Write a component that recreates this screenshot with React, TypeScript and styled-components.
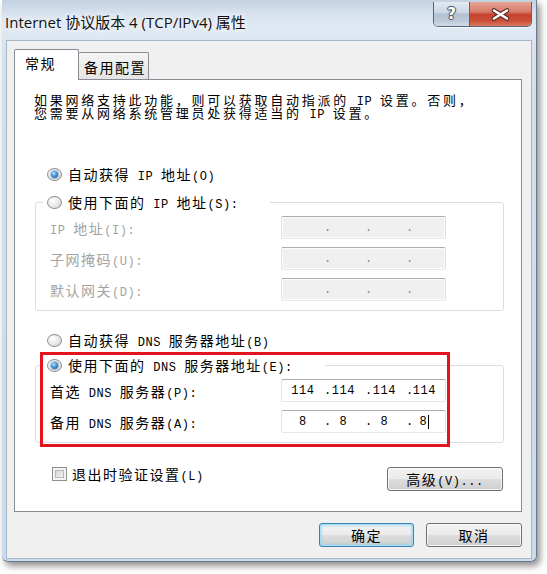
import React from "react";
import styled, { createGlobalStyle, css } from "styled-components";

const CJK_STACK = `"Noto Sans CJK SC", "Noto Sans", sans-serif`;

const GlobalStyle = createGlobalStyle`
  * { box-sizing: border-box; }
  html, body { margin: 0; padding: 0; background: #ffffff; }
  body {
    font-family: ${CJK_STACK};
    font-size: 14px;
    letter-spacing: 1.5px;
    color: #000;
  }
`;

const Latin = styled.span`
  font-family: "Liberation Mono", "DejaVu Sans Mono", monospace;
  font-size: 12px;
  line-height: 0;
  letter-spacing: 0.55px;
  white-space: pre;
`;

const Mixed: React.FC<{ text: string }> = ({ text }) => (
  <>
    {text
      .split(/([\x20-\x7e]+)/)
      .filter(Boolean)
      .map((part, i) =>
        /^[\x20-\x7e]+$/.test(part) ? (
          <Latin key={i}>{part}</Latin>
        ) : (
          <React.Fragment key={i}>{part}</React.Fragment>
        )
      )}
  </>
);

const Page = styled.div`
  width: 547px;
  height: 574px;
  overflow: hidden;
  padding-left: 2px;
  background: #fff;
`;

const Window = styled.div`
  width: 535px;
  display: flex;
  flex-direction: column;
  background: linear-gradient(
    180deg,
    #c2d0e0 0px,
    #d8e3ef 14px,
    #e0e9f3 30px,
    #d3e0ee 60px,
    #cadbeb 100%
  );
  border-right: 1px solid #6b7888;
  border-bottom: 1px solid #6b7888;
  border-bottom-right-radius: 6px;
  border-bottom-left-radius: 6px;
  box-shadow: 3px 4px 7px rgba(0, 0, 0, 0.45);
`;

const TitleBar = styled.div`
  height: 40px;
  display: flex;
  justify-content: space-between;
  align-items: flex-start;
  padding: 0 4px 0 3px;
`;

const TitleText = styled.div`
  margin-top: 11px;
  font-family: "Open Sans", "Noto Sans CJK SC", sans-serif;
  font-size: 15px;
  line-height: 22px;
  letter-spacing: 0;
  color: #111;
  white-space: nowrap;
  text-shadow: 0 0 6px #fff, 0 0 10px rgba(255, 255, 255, 0.9);
`;

const CaptionGroup = styled.div`
  display: flex;
  margin-top: 2px;
  height: 25px;
  border: 1px solid #56667a;
  border-top: none;
  border-radius: 0 0 5px 5px;
  overflow: hidden;
  box-shadow: 0 1px 0 rgba(255, 255, 255, 0.7);
`;

const CaptionButton = styled.div<{ $close?: boolean; $w: number }>`
  width: ${(p) => p.$w}px;
  display: flex;
  align-items: center;
  justify-content: center;
  background: ${(p) =>
    p.$close
      ? "linear-gradient(180deg, #e7a597 0%, #d77a68 42%, #c5422d 52%, #cc5039 80%, #dc7a62 100%)"
      : "linear-gradient(180deg, #e2e9f1 0%, #cdd8e4 42%, #b3c2d3 52%, #bccadb 80%, #cfdbe7 100%)"};
  & + & {
    border-left: 1px solid #56667a;
  }
`;

const HelpGlyph = styled.span`
  font-family: "DejaVu Sans", sans-serif;
  font-weight: bold;
  font-size: 15px;
  line-height: 1;
  letter-spacing: 0;
  color: #fff;
  text-shadow: 1px 0 0 #4a5666, -1px 0 0 #4a5666, 0 1px 0 #4a5666,
    0 -1px 0 #4a5666, 0 0 2px #2c3a4a;
`;

const Client = styled.div`
  margin: 0 4px 2px 4px;
  height: 519px;
  background: #f0f0f0;
  border: 1px solid #a9b6c5;
  padding: 8px 9px 11px 7px;
  display: flex;
  flex-direction: column;
`;

const TabStrip = styled.div`
  display: flex;
  align-items: flex-end;
  height: 30px;
`;

const Tab = styled.div<{ $active?: boolean }>`
  position: relative;
  display: flex;
  align-items: center;
  border: 1px solid #898c95;
  border-bottom: none;
  border-radius: 2px 2px 0 0;
  white-space: nowrap;
  ${(p) =>
    p.$active
      ? css`
          width: 65px;
          height: 31px;
          margin-bottom: -1px;
          z-index: 1;
          background: #fff;
          padding: 0 0 5px 10px;
        `
      : css`
          width: 70px;
          height: 27px;
          border-left: none;
          background: linear-gradient(180deg, #f4f4f4, #e4e4e4);
          padding: 1px 0 0 5px;
        `}
`;

const Panel = styled.div`
  position: relative;
  width: 508px;
  height: 433px;
  border: 1px solid #898c95;
  background: #fff;
  padding-top: 13px;
  display: flex;
  flex-direction: column;
  align-items: flex-start;
`;

const Intro = styled.div`
  margin-left: 19px;
  font-size: 13px;
  letter-spacing: 2.75px;
  line-height: 13px;
  white-space: nowrap;
`;

const IntroLine = styled.div`
  height: 13px;
`;

const OptionRow = styled.div<{ $mt: number }>`
  display: flex;
  align-items: center;
  gap: 6px;
  height: 16px;
  margin: ${(p) => p.$mt}px 0 0 32px;
  white-space: nowrap;
`;

const Radio = styled.span<{ $checked?: boolean }>`
  position: relative;
  flex: none;
  width: 15px;
  height: 13px;
  border-radius: 50%;
  border: 1px solid #8d9095;
  background: radial-gradient(
    ellipse at 35% 30%,
    #ffffff 0%,
    #ececec 45%,
    #c9cbce 100%
  );
  ${(p) =>
    p.$checked &&
    css`
      &::after {
        content: "";
        position: absolute;
        left: 3px;
        top: 2px;
        width: 7px;
        height: 7px;
        border-radius: 50%;
        background: radial-gradient(
          circle at 40% 35%,
          #c4e8ff 0%,
          #4a9ad8 40%,
          #1a4f8c 100%
        );
        box-shadow: 0 0 0 1px rgba(40, 90, 150, 0.35);
      }
    `}
`;

const GroupBox = styled.div<{ $mt: number }>`
  margin: ${(p) => p.$mt}px 0 0 20px;
  width: 469px;
  border: 1px solid #d5dfe5;
  border-radius: 3px;
  padding: 0 0 9px 14px;
`;

const GroupTitle = styled.div<{ $w: number }>`
  display: flex;
  align-items: center;
  gap: 6px;
  height: 16px;
  width: ${(p) => p.$w}px;
  margin: -9px 0 0 -7px;
  padding-left: 4px;
  background: #fff;
  white-space: nowrap;
`;

const FieldGrid = styled.div`
  display: grid;
  grid-template-columns: 231px 165px;
  grid-auto-rows: 23px;
  row-gap: 8px;
  align-items: center;
  margin-top: 6px;
`;

const FieldLabel = styled.div<{ $disabled?: boolean }>`
  color: ${(p) => (p.$disabled ? "#a3a3a3" : "#000")};
  white-space: nowrap;
  line-height: 16px;
`;

const IpBox = styled.div<{ $disabled?: boolean }>`
  width: 165px;
  height: 23px;
  border: 1px solid;
  border-color: #abadb3 #dbdfe6 #e3e9ef #e2e3ea;
  border-radius: 2px;
  background: ${(p) => (p.$disabled ? "#f0f0f0" : "#fff")};
  color: ${(p) => (p.$disabled ? "#8a8a8a" : "#000")};
  display: grid;
  grid-template-columns: 42px 4px 37px 4px 37px 4px 35px;
  align-items: center;
  box-shadow: ${(p) => (p.$disabled ? "inset 0 0 0 1px #fbfbfb" : "none")};
`;

const Octet = styled.span`
  display: flex;
  justify-content: center;
  align-items: center;
  font-family: "Liberation Mono", "DejaVu Sans Mono", monospace;
  font-size: 12px;
  letter-spacing: 0.55px;
  white-space: pre;
  &:not(:first-child) {
    padding-right: 6px;
  }
`;

const Dot = styled.span`
  font-family: "Liberation Mono", monospace;
  font-size: 12px;
  letter-spacing: 0;
  text-align: center;
`;

const Caret = styled.span`
  display: inline-block;
  width: 1px;
  height: 14px;
  margin-left: 1px;
  background: #000;
`;

const BottomRow = styled.div`
  display: flex;
  justify-content: space-between;
  align-items: flex-start;
  width: 451px;
  margin: 23px 0 0 37px;
`;

const CheckRow = styled.div`
  display: flex;
  align-items: center;
  gap: 5px;
  height: 16px;
  white-space: nowrap;
`;

const CheckBox = styled.span`
  flex: none;
  width: 15px;
  height: 14px;
  border: 1px solid #8e8f8f;
  background: linear-gradient(135deg, #c9cdd2 0%, #e6e8ea 55%, #f8f8f8 100%);
  box-shadow: inset 0 0 0 2px #f4f4f4, inset 0 0 0 3px #b4b9bf;
`;

const PushButton = styled.button<{ $w: number; $default?: boolean }>`
  width: ${(p) => p.$w}px;
  height: 24px;
  padding: 0;
  border: 1px solid ${(p) => (p.$default ? "#3c7fb1" : "#707070")};
  border-radius: 3px;
  background: linear-gradient(
    180deg,
    #f3f3f3 0%,
    #ebebeb 48%,
    #dddddd 52%,
    #cfcfcf 100%
  );
  box-shadow: ${(p) =>
    p.$default
      ? "inset 0 0 0 1px #a9e0f7, inset 0 0 3px 1px #7fcdf0"
      : "inset 0 0 0 1px rgba(255,255,255,0.75)"};
  font-family: ${CJK_STACK};
  font-size: 14px;
  line-height: 16px;
  letter-spacing: 1.5px;
  color: #000;
  white-space: nowrap;
`;

const AdvancedButton = styled(PushButton)`
  margin-top: 1px;
`;

const RedFrame = styled.div`
  position: absolute;
  left: 25px;
  top: 272px;
  width: 410px;
  height: 95px;
  border: 3px solid #e3141f;
  pointer-events: none;
`;

const Footer = styled.div`
  display: flex;
  justify-content: flex-end;
  gap: 12px;
  margin-top: 11px;
`;

const IpField: React.FC<{ octets?: string[]; disabled?: boolean; caret?: boolean }> = ({
  octets = ["", "", "", ""],
  disabled,
  caret,
}) => (
  <IpBox $disabled={disabled}>
    <Octet>{octets[0]}</Octet>
    <Dot>.</Dot>
    <Octet>{octets[1]}</Octet>
    <Dot>.</Dot>
    <Octet>{octets[2]}</Octet>
    <Dot>.</Dot>
    <Octet>
      {octets[3]}
      {caret && <Caret />}
    </Octet>
  </IpBox>
);

export default function App() {
  return (
    <>
      <GlobalStyle />
      <Page>
        <Window>
          <TitleBar>
            <TitleText>Internet 协议版本 4 (TCP/IPv4) 属性</TitleText>
            <CaptionGroup>
              <CaptionButton $w={35}>
                <HelpGlyph>?</HelpGlyph>
              </CaptionButton>
              <CaptionButton $w={62} $close>
                <svg width="19" height="13" viewBox="0 0 19 13">
                  <path
                    d="M3 2.5 L16 10.5 M16 2.5 L3 10.5"
                    stroke="#5b2a22"
                    strokeWidth="4.6"
                    strokeLinecap="round"
                    fill="none"
                  />
                  <path
                    d="M3 2.5 L16 10.5 M16 2.5 L3 10.5"
                    stroke="#ffffff"
                    strokeWidth="2.6"
                    strokeLinecap="round"
                    fill="none"
                  />
                </svg>
              </CaptionButton>
            </CaptionGroup>
          </TitleBar>
          <Client>
            <TabStrip>
              <Tab $active>常规</Tab>
              <Tab>备用配置</Tab>
            </TabStrip>
            <Panel>
              <Intro>
                <IntroLine>
                  <Mixed text="如果网络支持此功能，则可以获取自动指派的 IP 设置。否则，" />
                </IntroLine>
                <IntroLine>
                  <Mixed text="您需要从网络系统管理员处获得适当的 IP 设置。" />
                </IntroLine>
              </Intro>

              <OptionRow $mt={47}>
                <Radio $checked />
                <span>
                  <Mixed text="自动获得 IP 地址(O)" />
                </span>
              </OptionRow>

              <GroupBox $mt={20}>
                <GroupTitle $w={227}>
                  <Radio />
                  <span>
                    <Mixed text="使用下面的 IP 地址(S):" />
                  </span>
                </GroupTitle>
                <FieldGrid>
                  <FieldLabel $disabled>
                    <Mixed text="IP 地址(I):" />
                  </FieldLabel>
                  <IpField disabled />
                  <FieldLabel $disabled>
                    <Mixed text="子网掩码(U):" />
                  </FieldLabel>
                  <IpField disabled />
                  <FieldLabel $disabled>
                    <Mixed text="默认网关(D):" />
                  </FieldLabel>
                  <IpField disabled />
                </FieldGrid>
              </GroupBox>

              <OptionRow $mt={21}>
                <Radio />
                <span>
                  <Mixed text="自动获得 DNS 服务器地址(B)" />
                </span>
              </OptionRow>

              <GroupBox $mt={17}>
                <GroupTitle $w={282}>
                  <Radio $checked />
                  <span>
                    <Mixed text="使用下面的 DNS 服务器地址(E):" />
                  </span>
                </GroupTitle>
                <FieldGrid>
                  <FieldLabel>
                    <Mixed text="首选 DNS 服务器(P):" />
                  </FieldLabel>
                  <IpField octets={["114", "114", "114", "114"]} />
                  <FieldLabel>
                    <Mixed text="备用 DNS 服务器(A):" />
                  </FieldLabel>
                  <IpField octets={["8", "8", "8", "8"]} caret />
                </FieldGrid>
              </GroupBox>

              <BottomRow>
                <CheckRow>
                  <CheckBox />
                  <span>
                    <Mixed text="退出时验证设置(L)" />
                  </span>
                </CheckRow>
                <AdvancedButton $w={116}>
                  <Mixed text="高级(V)..." />
                </AdvancedButton>
              </BottomRow>

              <RedFrame />
            </Panel>
            <Footer>
              <PushButton $w={95} $default>
                确定
              </PushButton>
              <PushButton $w={96}>取消</PushButton>
            </Footer>
          </Client>
        </Window>
      </Page>
    </>
  );
}
